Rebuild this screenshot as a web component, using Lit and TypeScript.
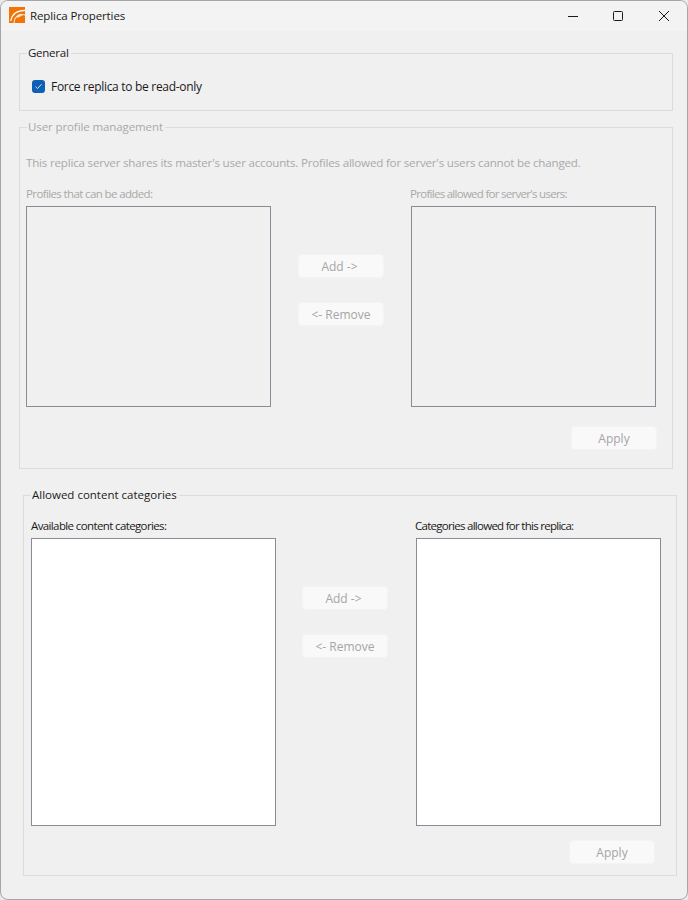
import { LitElement, html, css } from "lit";
import { customElement } from "lit/decorators.js";

@customElement("app-root")
export class AppRoot extends LitElement {
  static styles = css`
    :host { display: block; width: 688px; height: 900px; background: #e9e9e9; font-family: "Open Sans", "Noto Sans", sans-serif; font-size: 12px; color: #1a1a1a; }
    * { box-sizing: border-box; }
    .window { width: 688px; height: 900px; background: #f0f0f0; border: 1px solid #a6a6a6; border-radius: 8px; overflow: hidden; }
    .titlebar { height: 30px; background: #f3f3f3; display: flex; align-items: center; padding-left: 8px; }
    .logo { width: 16px; height: 16px; display: block; margin-bottom: 2px; }
    .title { margin-left: 5px; font-size: 11.5px; line-height: 16px; margin-bottom: 1px; letter-spacing: -0.1px; }
    .controls { margin-left: auto; display: flex; }
    .ctl { width: 45px; height: 30px; display: flex; align-items: center; justify-content: center; }
    .ctl:not(:first-child) { width: 46px; }
    .ctl svg { width: 12px; height: 12px; display: block; }
    .content { padding: 14px 0 0 18px; }
    fieldset { margin: 0; border: 1px solid #dcdcdc; min-width: 0; }
    legend { padding: 0 2px 0 1px; line-height: 16px; font-size: 11.5px; }
    .general { width: 654px; height: 66px; padding: 17px 12px 0; }
    .general legend { margin-left: -5px; letter-spacing: -0.25px; }
    .check { display: flex; align-items: center; gap: 6px; height: 16px; letter-spacing: -0.3px; }
    .box { width: 13px; height: 13px; border-radius: 3px; background: #0f5fb4; display: flex; align-items: center; justify-content: center; }
    .box svg { width: 9px; height: 9px; display: block; }
    .profiles { width: 654px; height: 350px; margin-top: 8px; padding: 20px 15px 0 6px; color: #a9a9a9; }
    .profiles legend { margin-left: 1px; letter-spacing: -0.1px; }
    .categories { width: 654px; height: 389px; margin: 18px 0 0 4px; padding: 15px 15px 0 7px; }
    .note { line-height: 16px; margin-bottom: 15px; font-size: 11.6px; letter-spacing: -0.2px; white-space: nowrap; }
    .cats { display: grid; grid-template-columns: 245px 140px 245px; }
    .label { display: block; line-height: 16px; height: 16px; margin-bottom: 4px; font-size: 11.5px; letter-spacing: -0.62px; white-space: nowrap; }
    .right .label { margin-left: -1px; letter-spacing: -0.72px; }
    .list { border: 1px solid #8b8b96; display: block; }
    .profiles .list { height: 201px; }
    .categories .list { height: 288px; background: #fff; }
    .mid { display: flex; flex-direction: column; gap: 24px; padding: 68px 0 0 27px; }
    .categories .mid { padding-left: 26px; }
    button { width: 86px; height: 24px; padding: 0; border: 1px solid #f4f4f4; border-radius: 4px; background: #f9f9f9; color: #a5a5a5; font: inherit; font-size: 12px; }
    .mid button:first-child { padding-right: 3px; }
    .apply-row { display: flex; justify-content: flex-end; margin-top: 19px; }
    .categories .apply-row { margin-top: 14px; padding-right: 6px; }
  `;

  private pane(label: string, side: string) {
    return html`<div class=${side}><span class="label">${label}</span><div class="list"></div></div>`;
  }

  private lists(a: string, b: string) {
    return html`<div class="cats">
      ${this.pane(a, "left")}
      <div class="mid"><button disabled>Add -&gt;</button><button disabled>&lt;- Remove</button></div>
      ${this.pane(b, "right")}
    </div>
    <div class="apply-row"><button disabled>Apply</button></div>`;
  }

  render() {
    return html`<div class="window">
      <div class="titlebar">
        <svg class="logo" viewBox="0 0 16 16">
          <rect width="16" height="16" fill="#f07407"/>
          <path d="M1.700 14C3 7.500 7.500 3.300 16 3.300" fill="none" stroke="#fff" stroke-width="1.200"/>
          <path d="M5 16C5 11 9 7 13.500 7.500C15 7.700 15.500 8 16 8.300M13.500 7.500C11 9 9.500 9.500 8.500 10.500" fill="none" stroke="#fde3cb" stroke-width="1.200"/>
        </svg>
        <span class="title">Replica Properties</span>
        <div class="controls">
          <div class="ctl"><svg viewBox="0 0 12 12"><path d="M1 6.500H11" stroke="#1a1a1a" fill="none"/></svg></div>
          <div class="ctl"><svg viewBox="0 0 12 12"><rect x="1.500" y="1.500" width="9" height="9" rx="1" stroke="#1a1a1a" fill="none"/></svg></div>
          <div class="ctl"><svg viewBox="0 0 12 12"><path d="M1 1L11 11M11 1L1 11" stroke="#1a1a1a" fill="none"/></svg></div>
        </div>
      </div>
      <div class="content">
        <fieldset class="general">
          <legend>General</legend>
          <div class="check">
            <span class="box"><svg viewBox="0 0 9 9"><path d="M1.500 4.700L3.500 6.600L7.500 2.200" stroke="#cfe0f2" fill="none"/></svg></span>
            <span>Force replica to be read-only</span>
          </div>
        </fieldset>
        <fieldset class="profiles">
          <legend>User profile management</legend>
          <div class="note">This replica server shares its master's user accounts. Profiles allowed for server's users cannot be changed.</div>
          ${this.lists("Profiles that can be added:", "Profiles allowed for server's users:")}
        </fieldset>
        <fieldset class="categories">
          <legend>Allowed content categories</legend>
          ${this.lists("Available content categories:", "Categories allowed for this replica:")}
        </fieldset>
      </div>
    </div>`;
  }
}
